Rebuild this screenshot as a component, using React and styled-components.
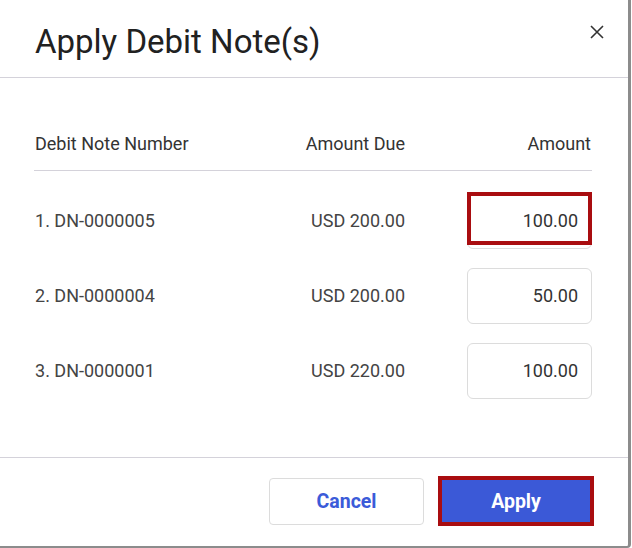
import React from 'react';
import styled, { createGlobalStyle } from 'styled-components';

const GlobalStyle = createGlobalStyle`
  html, body {
    margin: 0;
    padding: 0;
    background: #ffffff;
    font-family: Roboto, "Liberation Sans", Arial, sans-serif;
  }
  * { box-sizing: border-box; }
`;

const notes = [
  { id: 1, number: 'DN-0000005', due: 'USD 200.00', amount: '100.00', flagged: true },
  { id: 2, number: 'DN-0000004', due: 'USD 200.00', amount: '50.00' },
  { id: 3, number: 'DN-0000001', due: 'USD 220.00', amount: '100.00' },
];

const App = () => {
  return (
    <>
      <GlobalStyle />
      <Dialog>
        <Header>
          <Title>Apply Debit Note(s)</Title>
          <CloseButton aria-label="close">
            <svg width="14" height="14" viewBox="0 0 14 14">
              <path d="M1 1L13 13M13 1L1 13" stroke="#333" strokeWidth="1.6" fill="none" />
            </svg>
          </CloseButton>
        </Header>
        <Body>
          <HeadRow>
            <span>Debit Note Number</span>
            <RightCell>Amount Due</RightCell>
            <RightCell>Amount</RightCell>
          </HeadRow>
          <Rows>
            {notes.map((n) => (
              <Row key={n.id}>
                <span>{n.id}. {n.number}</span>
                <RightCell>{n.due}</RightCell>
                <InputWrap>
                  <AmountInput defaultValue={n.amount} />
                  {n.flagged && <Highlight />}
                </InputWrap>
              </Row>
            ))}
          </Rows>
        </Body>
        <Footer>
          <CancelButton>Cancel</CancelButton>
          <ApplyButton>Apply</ApplyButton>
        </Footer>
      </Dialog>
    </>
  );
};

const Dialog = styled.div`
  width: 631px;
  height: 548px;
  background: #fff;
  border-right: 3px solid #8c8c8c;
  border-bottom: 2px solid #8c8c8c;
  border-bottom-right-radius: 4px;
  display: flex;
  flex-direction: column;
`;

const Header = styled.div`
  height: 78px;
  flex-shrink: 0;
  border-bottom: 1px solid #d4d2da;
  display: flex;
  align-items: flex-start;
  justify-content: space-between;
  padding: 22px 24px 0 35px;
`;

const Title = styled.h2`
  margin: 0;
  font-size: 33px;
  line-height: 40px;
  font-weight: 400;
  color: #212121;
`;

const CloseButton = styled.button`
  border: none;
  background: none;
  padding: 0;
  margin-top: 3px;
  width: 14px;
  height: 14px;
  display: flex;
  cursor: pointer;
`;

const Body = styled.div`
  flex: 1;
  padding: 52px 36px 0 34px;
`;

const HeadRow = styled.div`
  display: grid;
  grid-template-columns: 1fr 180px 187px;
  height: 41px;
  padding-bottom: 14px;
  align-items: center;
  border-bottom: 1px solid #d4d2da;
  font-size: 18px;
  color: #333;
  padding-left: 1px;
  span:last-child { padding-right: 1px; }
`;

const Rows = styled.div`
  margin-top: 12px;
`;

const Row = styled.div`
  display: grid;
  grid-template-columns: 1fr 180px 187px;
  height: 75px;
  align-items: center;
  font-size: 18px;
  color: #444;
  padding-left: 1px;
`;

const RightCell = styled.span`
  text-align: right;
`;

const InputWrap = styled.div`
  position: relative;
  justify-self: end;
  width: 125px;
  height: 56px;
`;

const AmountInput = styled.input`
  display: block;
  width: 100%;
  height: 100%;
  border: 1px solid #dcdcdc;
  border-radius: 6px;
  text-align: right;
  padding: 0 13px;
  font-family: Roboto, "Liberation Sans", Arial, sans-serif;
  font-size: 18px;
  color: #333;
  outline: none;
`;

const Highlight = styled.span`
  position: absolute;
  left: 0;
  top: -1px;
  width: 125px;
  height: 53px;
  border: 4px solid #a90d10;
  pointer-events: none;
`;

const Footer = styled.div`
  height: 89px;
  flex-shrink: 0;
  border-top: 1px solid #d4d2da;
  display: flex;
  align-items: flex-start;
  justify-content: flex-end;
  gap: 14px;
  padding: 18px 34px 0 0;
`;

const CancelButton = styled.button`
  width: 155px;
  height: 47px;
  margin-top: 2px;
  background: #fff;
  border: 1px solid #dcdcdc;
  border-radius: 4px;
  color: #3b5bd9;
  font-family: Roboto, "Liberation Sans", Arial, sans-serif;
  font-size: 19.5px;
  font-weight: 700;
`;

const ApplyButton = styled.button`
  width: 156px;
  height: 50px;
  background: #3b59d7;
  border: 4px solid #a90d10;
  color: #fff;
  font-family: Roboto, "Liberation Sans", Arial, sans-serif;
  font-size: 19.5px;
  font-weight: 700;
`;

export default App;
